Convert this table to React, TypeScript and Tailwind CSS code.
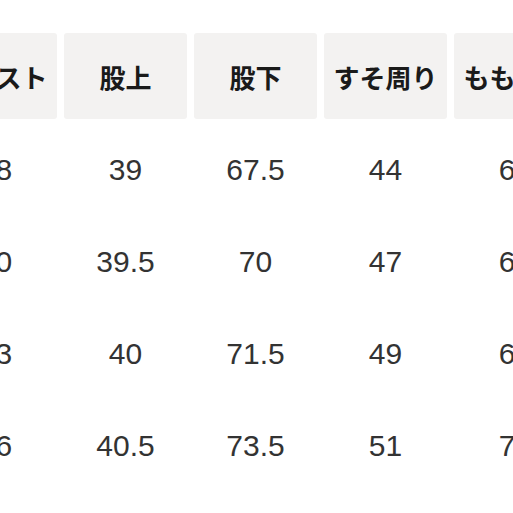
import React from "react";

const headers = ["ウエスト", "股上", "股下", "すそ周り", "もも周り"];
const rows = [
  ["68", "39", "67.5", "44", "62"],
  ["70", "39.5", "70", "47", "64"],
  ["73", "40", "71.5", "49", "66"],
  ["76", "40.5", "73.5", "51", "70"],
];

export default function App() {
  return (
    <div className="w-[513px] h-[513px] overflow-hidden bg-white">
      <div className="ml-[-66px] pt-[33px] flex flex-col">
        <div className="flex gap-[7px]">
          {headers.map((h) => (
            <div
              key={h}
              className="w-[123px] h-[86px] shrink-0 rounded-[3px] bg-[#f3f2f1] flex items-center justify-center whitespace-nowrap text-[26px] font-bold text-[#1a1a1a]"
              style={{ fontFamily: '"Noto Sans CJK JP", sans-serif' }}
            >
              {h}
            </div>
          ))}
        </div>
        <div className="mt-[4px] flex flex-col">
          {rows.map((r, i) => (
            <div key={i} className="flex gap-[7px] h-[92px]">
              {r.map((v, j) => (
                <div
                  key={j}
                  className="w-[123px] shrink-0 flex items-center justify-center whitespace-nowrap text-[30px] text-[#333333]"
                  style={{ fontFamily: '"Liberation Sans", Arial, sans-serif' }}
                >
                  {v}
                </div>
              ))}
            </div>
          ))}
        </div>
      </div>
    </div>
  );
}
